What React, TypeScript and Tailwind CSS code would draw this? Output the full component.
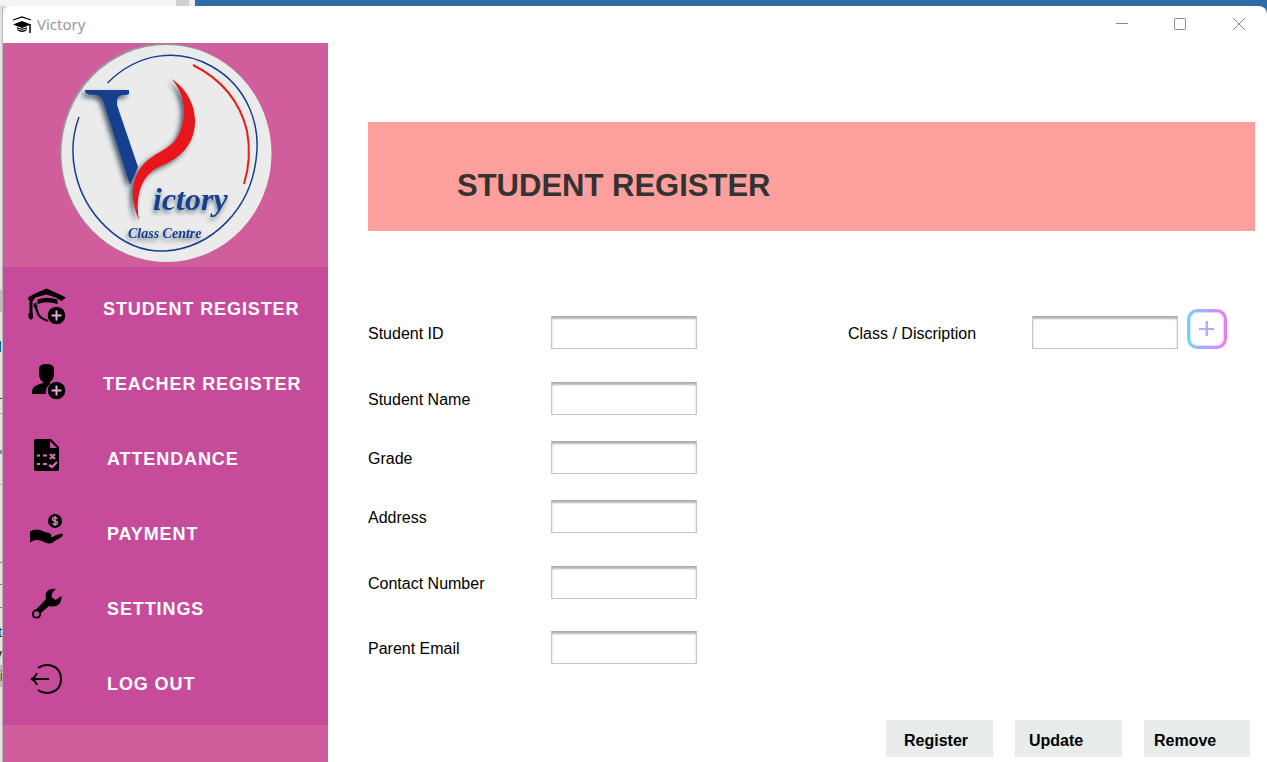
import React from "react";

const iconClass = "h-10 w-10 shrink-0";

function PlusBadge() {
  return (
    <g>
      <circle cx="29.500" cy="29.500" r="8.800" fill="#000" />
      <path d="M29.500 24.500v10M24.500 29.500h10" stroke="#e9a9d2" strokeWidth="2" />
    </g>
  );
}

function StudentIcon() {
  return (
    <svg viewBox="0 0 40 40" className={iconClass} aria-hidden="true">
      <path d="M19.500 2.500L6 8.500 1 11.500V14h1.500v14h3V15l3-3.500 11-3 9 3 6 3.500 4.500-3.500L33 8.500z" fill="#000" />
      <path d="M10.500 18v-4.500q9-3.500 20 0V18q-10-3.500-20 0z" fill="#000" />
      <path d="M9 17l-1.500 2.500 2.500 5q1 5 4 7t7 3.500" fill="none" stroke="#000" strokeWidth="2" strokeLinejoin="round" />
      <path d="M10 19q-2 6 2 8" fill="none" stroke="#000" strokeWidth="1.500" />
      <path d="M1.500 27h4.500v4.500L4 34l-2.500-2.500z" fill="#000" />
      <PlusBadge />
    </svg>
  );
}

function TeacherIcon() {
  return (
    <svg viewBox="0 0 40 40" className={iconClass} aria-hidden="true">
      <path d="M12 8q0-5 7.500-5T27 8v7q-1 4-4 6v2q-5 4-4 10H5v-2q0-5 5-7l6-2v-1q-3-2-4-6z" fill="#000" />
      <PlusBadge />
    </svg>
  );
}

function AttendanceIcon() {
  return (
    <svg viewBox="0 0 40 40" className={iconClass} aria-hidden="true">
      <path d="M9 3h13v10h10v20q0 2-2 2H9q-2 0-2-2V5q0-2 2-2z" fill="#000" />
      <path d="M22 3h2l8 8v2H22z" fill="#000" />
      <path d="M23 5l7 7h-7z" fill="#c74b9b" />
      <path d="M10 19.500h3M16 19.500h4M10 28h3M16 28h4M23 18l5 5m0-5l-5 5M22 29l3 2 5-5" fill="none" stroke="#dc6db6" strokeWidth="2.200" />
    </svg>
  );
}

function PaymentIcon() {
  return (
    <svg viewBox="0 0 40 40" className={iconClass} aria-hidden="true">
      <circle cx="28" cy="10" r="7" fill="#000" />
      <path d="M30.500 7.500q-5-2-5 .5 0 1.500 2.500 2t2.500 2q0 2.500-5 .5M28 5v10" fill="none" stroke="#d887b9" strokeWidth="1.400" />
      <path d="M3 20.500q5-3 10-1.500 4 2 9 3 3 1 2 4h1l6-2.500q4-1.500 5 0 0 2-4 4-4 2-6 4-3 2-8 0-4-3-9-2.500-3 0-6 2.500z" fill="#000" />
    </svg>
  );
}

function SettingsIcon() {
  return (
    <svg viewBox="0 0 40 40" className={iconClass} aria-hidden="true">
      <path d="M29 3q-7-1-10 4-1 3 0 6l-9.500 10Q5 24 5 28q0 4.500 4.500 4.500T14 28v-1l8-7q7 2 11-3 2-4 1.500-7l-6 4-4-3q0-5 4.500-8z" fill="#000" />
      <circle cx="9.500" cy="28" r="2.700" fill="#c74b9b" />
    </svg>
  );
}

function LogoutIcon() {
  return (
    <svg viewBox="0 0 40 40" className={iconClass} aria-hidden="true" fill="none" stroke="#000" strokeWidth="2">
      <path d="M11 7C19 1 34 4 34 18S19 35 11 29M4 18h18M10 12q-2 5-6 6 4 1 6 6" />
    </svg>
  );
}

const menu = [
  { label: "STUDENT REGISTER", Icon: StudentIcon, pad: "pl-9" },
  { label: "TEACHER REGISTER", Icon: TeacherIcon, pad: "pl-9" },
  { label: "ATTENDANCE", Icon: AttendanceIcon, pad: "pl-10" },
  { label: "PAYMENT", Icon: PaymentIcon, pad: "pl-10" },
  { label: "SETTINGS", Icon: SettingsIcon, pad: "pl-10" },
  { label: "LOG OUT", Icon: LogoutIcon, pad: "pl-10" },
];

function VictoryLogo() {
  return (
    <svg viewBox="0 0 212 220" className="h-[220px] w-[212px]" role="img" aria-label="Victory Class Centre">
      <defs>
        <filter id="logo-shadow" x="-20%" y="-20%" width="140%" height="140%">
          <feDropShadow dx="-3" dy="3" stdDeviation="2.500" floodColor="#24384a" floodOpacity="0.8" />
        </filter>
        <filter id="text-shadow" x="-20%" y="-40%" width="140%" height="200%">
          <feDropShadow dx="-1" dy="3" stdDeviation="2" floodColor="#24384a" floodOpacity="0.6" />
        </filter>
      </defs>
      <ellipse cx="105" cy="109.500" rx="105" ry="109" fill="#999" />
      <ellipse cx="106.500" cy="110.500" rx="105" ry="108.500" fill="#ebebeb" />
      <path d="M47.500 40C78 9 119 5 151 23c38 21 50 61 45 94-6 48-43 88-91 91-44 2-81-37-90-80-4-20-2-38 4-54" fill="none" stroke="#173f8d" strokeWidth="1.500" />
      <path d="M133 22c28 14 47 37 54 66q5 27-3 53" fill="none" stroke="#ed1c16" strokeWidth="2" />
      <g filter="url(#logo-shadow)">
        <path d="M25 47h44v4q-1 1-7 1-4 1-5 5v5l21 62-8 18L44 60q-2-7-8-8-10 0-11-3z" fill="#143f8d" />
        <path d="M112 36c13 9 23 24 23 42 0 24-16 38-34 45-20 8-26 30-22 54-9-20-8-42 4-55 13-15 29-14 37-33 8-22 3-39-8-53z" fill="#e7171b" />
      </g>
      <g filter="url(#text-shadow)" fill="#173f8d" fontFamily="Liberation Serif, serif" fontStyle="italic" fontWeight="700">
        <text x="93" y="167" fontSize="32">ictory</text>
        <text x="68" y="195" fontSize="14">Class Centre</text>
      </g>
    </svg>
  );
}

const inputClass =
  "h-[33px] w-[146px] shrink-0 border border-[#c4c4c4] border-t-[#aaa] bg-white px-2 text-base shadow-[inset_0_2px_2px_#b5b5b5] outline-none";

const labelClass = "w-[183px] shrink-0 pt-0.5";

const fields = [
  { id: "student-name", label: "Student Name", type: "text", gap: "mt-[33px]" },
  { id: "grade", label: "Grade", type: "text", gap: "mt-[26px]" },
  { id: "address", label: "Address", type: "text", gap: "mt-[26px]" },
  { id: "contact", label: "Contact Number", type: "tel", gap: "mt-[33px]" },
  { id: "email", label: "Parent Email", type: "email", gap: "mt-[32px]" },
];

function AddButton() {
  return (
    <button type="button" aria-label="Add class" className="mb-2 ml-[9px] h-10 w-10 shrink-0">
      <svg viewBox="0 0 40 40" className="h-10 w-10" aria-hidden="true">
        <defs>
          <linearGradient id="add-edge" x1="0" x2="1">
            <stop offset="0" stopColor="#76cffb" />
            <stop offset="1" stopColor="#e87bfa" />
          </linearGradient>
          <linearGradient id="add-plus" x1="0" x2="1">
            <stop offset="0" stopColor="#a9b6fc" />
            <stop offset="1" stopColor="#c79dfb" />
          </linearGradient>
        </defs>
        <rect x="1.500" y="1.500" width="37" height="37" rx="9" fill="#fff" stroke="url(#add-edge)" strokeWidth="3" />
        <rect x="3.500" y="3.500" width="33" height="33" rx="7" fill="none" stroke="url(#add-edge)" strokeOpacity="0.4" />
        <path d="M12 19h15v2H21v6h-2.500v-6H12z M18.500 12H21v7h-2.500z" fill="url(#add-plus)" />
      </svg>
    </button>
  );
}

export default function App() {
  return (
    <div className="flex min-h-screen flex-col bg-[#e1e1e1] font-['Liberation_Sans',Arial,sans-serif] text-black">
      <div className="flex h-[6px]" aria-hidden="true">
        <div className="w-[176px] bg-[#f4f4f4]" />
        <div className="w-[13px] bg-[#d0d0d0]" />
        <div className="w-[6px] bg-[#eee]" />
        <div className="flex-1 bg-[#2e6ca6]" />
      </div>
      <div className="flex flex-1 bg-[linear-gradient(to_right,#e1e1e1_50%,#2e6ca6_50%)]">
        <div className="w-[3px] shrink-0 overflow-hidden border-r border-[#b5b5b5] bg-[#e3e3e3]" aria-hidden="true">
          <div className="mt-[284px] h-[22px] bg-[#bbb]" />
          <div className="mt-[29px] h-[11px] w-px bg-[#005a9e]" />
          <div className="mt-[46px] h-px bg-[#333]" />
          <div className="mt-[14px] h-px bg-[#aaa]" />
          <div className="mt-[36px] h-1 bg-[#858ba0]" />
          <div className="mt-[30px] h-px bg-[#aaa]" />
          <div className="mt-[77px] h-px bg-[#777]" />
          <div className="mt-[21px] h-px bg-[#777]" />
          <div className="mt-[22px] h-px bg-[#777]" />
          <div className="mt-[13px] flex h-[22px] items-center justify-end text-sm">t</div>
          <div className="flex h-[22px] items-center justify-end text-sm">y</div>
          <div className="flex h-[22px] items-center bg-[#bbb] text-sm text-[#8a4a00]">i</div>
        </div>
        <div className="flex min-w-0 flex-1 flex-col overflow-hidden rounded-t-lg bg-white">
          <header className="flex h-[37px] items-center pl-[9px]">
            <svg viewBox="0 0 20 18" className="h-[18px] w-5" aria-hidden="true">
              <path d="M1 4L10 1l9 3" fill="none" stroke="#000" strokeWidth="1.200" />
              <path d="M1 8.500L10 5l9 3.500-9 3.500z" fill="#000" />
              <path d="M5 11q5 3 10 0v3q-5 4-10 0z" fill="#000" />
              <path d="M5 13q5 2.500 10 0" fill="none" stroke="#fff" strokeWidth="0.800" />
              <path d="M18 8v9" stroke="#000" strokeWidth="1.500" />
            </svg>
            <span className="ml-[5px] font-['Noto_Sans',sans-serif] text-[15px] text-[#999]">Victory</span>
            <div className="ml-auto flex items-center gap-[35px] pr-[16px] pb-px">
              <button type="button" aria-label="Minimize" className="h-6 w-6">
                <svg viewBox="0 0 24 24" className="h-6 w-6" stroke="#888"><path d="M7 11.500h12" /></svg>
              </button>
              <button type="button" aria-label="Maximize" className="h-6 w-6">
                <svg viewBox="0 0 24 24" className="h-6 w-6" stroke="#888" fill="none"><rect x="6.500" y="6.500" width="11" height="11" rx="1" /></svg>
              </button>
              <button type="button" aria-label="Close" className="h-6 w-6">
                <svg viewBox="0 0 24 24" className="h-6 w-6" stroke="#888"><path d="M6 6l12 12M18 6L6 18" /></svg>
              </button>
            </div>
          </header>
          <div className="flex flex-1">
            <aside className="w-[325px] shrink-0 bg-[#d15e9c]">
              <div className="flex h-[224px] justify-center pl-px">
                <VictoryLogo />
              </div>
              <nav className="bg-[#c74b9b] pb-2">
                {menu.map(({ label, Icon, pad }) => (
                  <a key={label} href="#" className="flex h-[75px] items-center pt-[3px] pl-6">
                    <Icon />
                    <span className={`${pad} pt-[5px] text-lg font-bold tracking-wider text-white`}>{label}</span>
                  </a>
                ))}
              </nav>
            </aside>
            <main className="flex min-w-0 flex-1 flex-col pl-10">
              <h1 className="mt-[79px] mr-3 flex h-[109px] items-center bg-[#fd9f9d] pt-[19px] pl-[89px] text-[31px] font-bold text-[#333]">
                STUDENT REGISTER
              </h1>
              <form className="flex flex-1 flex-col" onSubmit={(e) => e.preventDefault()}>
                <div className="mt-[85px] flex h-[33px] items-center">
                  <label htmlFor="student-id" className={labelClass}>Student ID</label>
                  <input id="student-id" className={inputClass} />
                  <label htmlFor="class" className="ml-[151px] w-[184px] shrink-0 pt-0.5">Class / Discription</label>
                  <input id="class" className={inputClass} />
                  <AddButton />
                </div>
                {fields.map(({ id, label, type, gap }) => (
                  <div key={id} className={`${gap} flex h-[33px] items-center`}>
                    <label htmlFor={id} className={labelClass}>{label}</label>
                    <input id={id} type={type} className={inputClass} />
                  </div>
                ))}
                <div className="mt-auto flex justify-end gap-[22px] pr-[17px] pb-[5px] font-bold">
                  <button type="submit" className="h-[37px] w-[107px] bg-[#e8eceb] pt-1 pl-[18px] text-left">Register</button>
                  <button type="button" className="h-[37px] w-[107px] bg-[#e8eceb] pt-1 pl-[14px] text-left">Update</button>
                  <button type="button" className="h-[37px] w-[106px] bg-[#e8eceb] pt-1 pl-[10px] text-left">Remove</button>
                </div>
              </form>
            </main>
          </div>
        </div>
      </div>
    </div>
  );
}
